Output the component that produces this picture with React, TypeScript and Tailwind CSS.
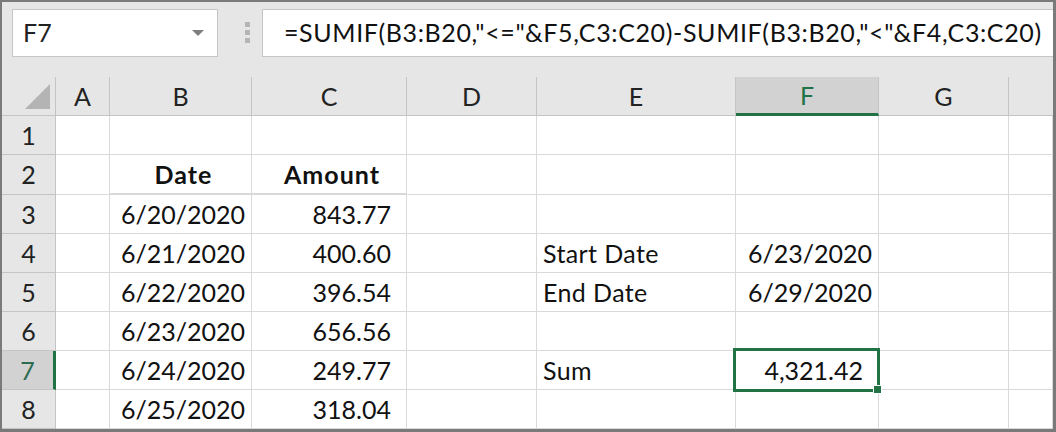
import React from 'react';

const FONT = { fontFamily: 'Lato, "Open Sans", sans-serif' };

type CellDef = {
  text?: string;
  align?: 'left' | 'right' | 'center';
  bold?: boolean;
  num?: boolean;
  underline?: boolean;
};

const COLS = ['A', 'B', 'C', 'D', 'E', 'F', 'G', ''];

// rows 1..8, columns A..H
const ROWS: CellDef[][] = [
  [{}, {}, {}, {}, {}, {}, {}, {}],
  [{}, { text: 'Date', align: 'center', bold: true, underline: true }, { text: 'Amount', align: 'center', bold: true, underline: true }, {}, {}, {}, {}, {}],
  [{}, { text: '6/20/2020', align: 'right' }, { text: '843.77', align: 'right', num: true }, {}, {}, {}, {}, {}],
  [{}, { text: '6/21/2020', align: 'right' }, { text: '400.60', align: 'right', num: true }, {}, { text: 'Start Date', align: 'left' }, { text: '6/23/2020', align: 'right' }, {}, {}],
  [{}, { text: '6/22/2020', align: 'right' }, { text: '396.54', align: 'right', num: true }, {}, { text: 'End Date', align: 'left' }, { text: '6/29/2020', align: 'right' }, {}, {}],
  [{}, { text: '6/23/2020', align: 'right' }, { text: '656.56', align: 'right', num: true }, {}, {}, {}, {}, {}],
  [{}, { text: '6/24/2020', align: 'right' }, { text: '249.77', align: 'right', num: true }, {}, { text: 'Sum', align: 'left' }, { text: '4,321.42', align: 'right', num: true }, {}, {}],
  [{}, { text: '6/25/2020', align: 'right' }, { text: '318.04', align: 'right', num: true }, {}, {}, {}, {}, {}],
];

const Cell = ({ def, selected }: { def: CellDef; selected?: boolean }) => {
  const justify =
    def.align === 'right' ? 'justify-end' : def.align === 'center' ? 'justify-center' : 'justify-start';
  const pad = def.num ? 'pr-[15px]' : def.align === 'right' ? 'pr-[6px]' : 'pl-[6px]';
  return (
    <div
      className={`relative flex items-center ${justify} ${pad} bg-white border-r border-[#d9d9d9] ${
        def.underline ? 'border-b-2 border-b-[#1a1a1a]' : 'border-b'
      }`}
    >
      <span
        className={`text-[25px] leading-none text-[#111] ${def.bold ? 'font-bold tracking-[1px]' : ''} ${
          def.align === 'left' ? 'tracking-[0.4px]' : ''
        }`}
      >
        {def.text}
      </span>
      {selected && (
        <>
          <div className="absolute -left-[3px] -top-[3px] -right-[2px] -bottom-[3px] border-[3px] border-[#217346] z-10" />
          <div className="absolute left-[137px] top-[34px] w-[9px] h-[9px] bg-[#217346] border border-white z-20" />
        </>
      )}
    </div>
  );
};

export default function App() {
  return (
    <div
      className="w-[1056px] h-[432px] bg-[#e6e6e6] border-l-2 border-t-2 border-r-[3px] border-b-[3px] border-[#7a7a7a] flex flex-col overflow-hidden"
      style={FONT}
    >
      {/* Formula bar */}
      <div className="h-[75px] shrink-0 flex items-start pt-[7px]">
        <div className="ml-[10px] w-[206px] h-[48px] bg-white border border-[#c6c6c6] flex items-center pl-[10px] pr-[13px]">
          <span className="text-[25px] text-[#222] flex-1">F7</span>
          <svg width="12" height="6" viewBox="0 0 12 6">
            <path d="M0 0 L12 0 L6 6 Z" fill="#7f7f7f" />
          </svg>
        </div>
        <div className="ml-[27px] mt-[13px] flex flex-col gap-[3px]">
          <div className="w-[5px] h-[5px] bg-[#b5b5b5]" />
          <div className="w-[5px] h-[5px] bg-[#b5b5b5]" />
          <div className="w-[5px] h-[5px] bg-[#b5b5b5]" />
        </div>
        <div className="ml-[12px] flex-1 h-[48px] bg-white border border-r-0 border-[#c6c6c6] flex items-center pl-[21px] whitespace-nowrap">
          <span className="text-[25px] tracking-[0.62px] text-[#111]">
            =SUMIF(B3:B20,"&lt;="&amp;F5,C3:C20)-SUMIF(B3:B20,"&lt;"&amp;F4,C3:C20)
          </span>
        </div>
      </div>

      {/* Sheet grid */}
      <div className="grid grid-cols-[54px_54px_142px_155px_130px_199px_143px_130px_44px] grid-rows-[39px_39px_40px_39px_39px_39px_39px_39px_39px] [&>div]:border-[#d9d9d9]">
        {/* corner */}
        <div className="relative bg-[#e6e6e6] border-r border-b !border-[#c4c4c4]">
          <svg className="absolute left-[23px] top-[7px]" width="25" height="25" viewBox="0 0 25 25">
            <path d="M0 25 L25 25 L25 0 Z" fill="#b4b4b4" />
          </svg>
        </div>
        {COLS.map((c, i) => (
          <div
            key={'h' + i}
            className={`flex items-center justify-center border-r border-b !border-[#c4c4c4] ${
              c === 'F' ? 'bg-[#d2d2d2] !border-b-[3px] !border-b-[#217346]' : 'bg-[#e6e6e6]'
            } ${i === 7 ? '!border-r-0' : ''}`}
          >
            <span className={`text-[25px] leading-none ${c === 'F' ? 'text-[#217346]' : 'text-[#222]'}`}>{c}</span>
          </div>
        ))}

        {ROWS.map((row, r) => (
          <React.Fragment key={'r' + r}>
            <div
              className={`flex items-center justify-center border-b !border-[#c4c4c4] ${
                r === 6 ? 'bg-[#d2d2d2] border-r-[3px] !border-r-[#217346]' : 'bg-[#e6e6e6] border-r'
              }`}
            >
              <span className={`text-[25px] leading-none ${r === 6 ? 'text-[#2e6b52]' : 'text-[#222]'}`}>{r + 1}</span>
            </div>
            {row.map((def, c) => (
              <Cell key={c} def={def} selected={r === 6 && c === 5} />
            ))}
          </React.Fragment>
        ))}
      </div>
    </div>
  );
}
